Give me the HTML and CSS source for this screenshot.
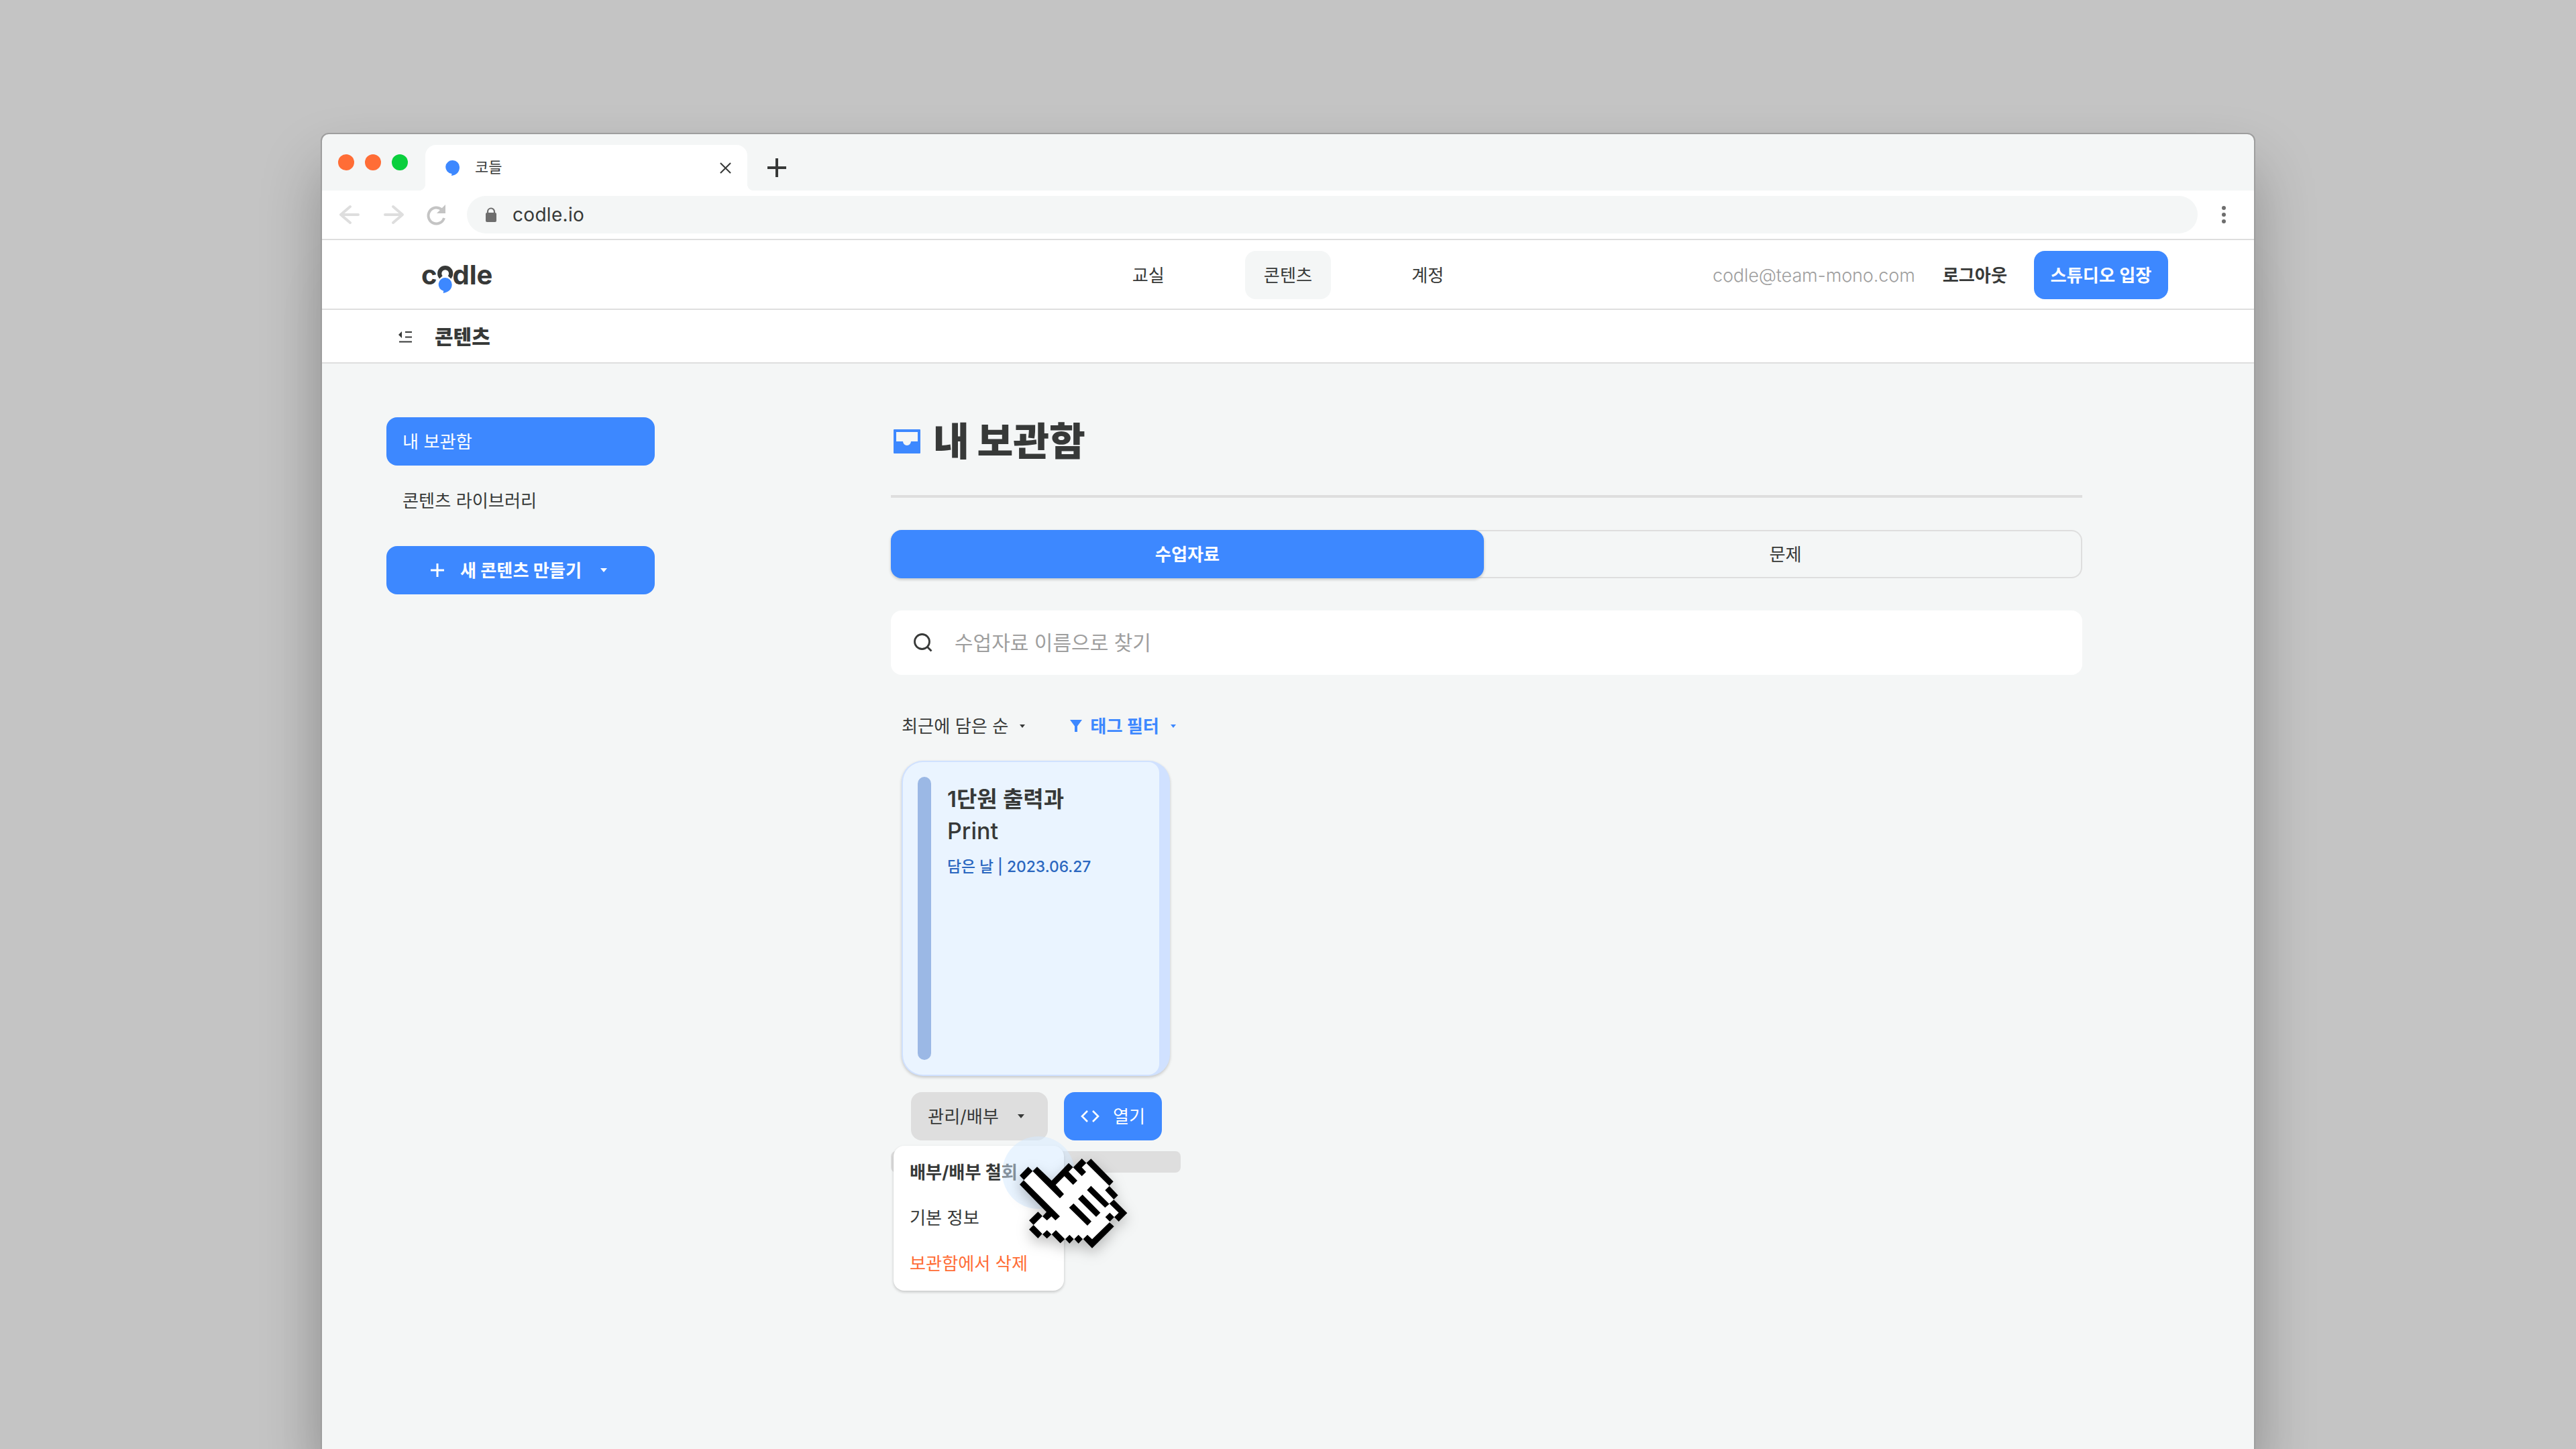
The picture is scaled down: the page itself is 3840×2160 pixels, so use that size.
FILE: index.html
```
<!DOCTYPE html>
<html lang="ko">
<head>
    <meta charset="UTF-8">
    <meta name="viewport" content="width=device-width, initial-scale=1.0">
    <title>코들</title>
    <link rel="stylesheet" href="styles.css">
</head>
<body>
    <div class="window">
        <div class="tab-bar">
            <div class="dots">
                <span class="dot"></span>
                <span class="dot"></span>
                <span class="dot dot-green"></span>
            </div>
            <div class="tab">
                <svg class="favicon" viewBox="0 0 20 23"><path d="M10 0a10 10 0 0 1 10 10c0 7-4 12-12 13l.5-3A10 10 0 0 1 10 0z" fill="#3d88ff"/></svg>
                <span class="tab-title">코들</span>
                <svg class="tab-close" viewBox="0 0 18 18"><path d="M1 1l16 16M17 1L1 17" stroke="#373938" stroke-width="2.2"/></svg>
            </div>
            <svg class="tab-new" viewBox="0 0 28 28"><path d="M14 0v28M0 14h28" stroke="#373938" stroke-width="4"/></svg>
        </div>

        <div class="toolbar">
            <svg class="arrow" viewBox="0 0 30 28"><path d="M28 14H3M16 2L2 14l14 12" fill="none" stroke="#dedede" stroke-width="4" stroke-linecap="round" stroke-linejoin="round"/></svg>
            <svg class="arrow" viewBox="0 0 30 28"><path d="M2 14h25M14 2l14 12-14 12" fill="none" stroke="#dedede" stroke-width="4" stroke-linecap="round" stroke-linejoin="round"/></svg>
            <svg class="reload" viewBox="0 0 28 30"><path d="M26 20A12 12 0 1 1 22.5 7.5" fill="none" stroke="#c4c4c4" stroke-width="4"/><path d="M28 0v13H15z" fill="#c4c4c4"/></svg>
            <div class="address">
                <svg class="lock" viewBox="0 0 16 22"><path d="M3 9V6.5a5 5 0 0 1 10 0V9" fill="none" stroke="#6e6e6e" stroke-width="2.2"/><rect y="8" width="16" height="14" rx="2" fill="#6e6e6e"/></svg>
                <span>codle.io</span>
            </div>
            <svg class="more" viewBox="0 0 6 26"><circle cx="3" cy="3" r="3"/><circle cx="3" cy="13" r="3"/><circle cx="3" cy="23" r="3"/></svg>
        </div>

        <header class="header">
            <div class="logo">
                <span>c</span>
                <svg class="logo-o" viewBox="0 0 23 43">
                    <path d="M5.4 18.4A8.500 8.500 0 1 1 18 18.400" fill="none" stroke="#373938" stroke-width="6.200"/>
                    <path d="M11.700 19a10 10 0 0 1 10 10c0 7-4.500 11.500-13 13l.5-3.300A10 10 0 0 1 11.700 19z" fill="#3d88ff" stroke="#fff" stroke-width="3" paint-order="stroke"/>
                </svg>
                <span>dle</span>
            </div>
            <nav class="nav">
                <a class="nav-item">교실</a>
                <a class="nav-item active">콘텐츠</a>
                <a class="nav-item">계정</a>
            </nav>
            <div class="account">
                <span class="email">codle@team-mono.com</span>
                <span class="logout">로그아웃</span>
                <button class="btn studio">스튜디오 입장</button>
            </div>
        </header>

        <div class="sub-header">
            <svg class="fold" viewBox="0 0 20 17"><path d="M0 5l5-5v10z"/><path d="M10 0h10v2H10zM10 7.500h10v2H10zM1 14.500h19v2H1z"/></svg>
            <span>콘텐츠</span>
        </div>

        <div class="body">
            <aside class="sidebar">
                <a class="side-item active">내 보관함</a>
                <a class="side-item">콘텐츠 라이브러리</a>
                <button class="btn create">
                    <svg class="plus" viewBox="0 0 20 20"><path d="M10 0v20M0 10h20" stroke="#fff" stroke-width="3"/></svg>
                    <span>새 콘텐츠 만들기</span>
                    <svg class="caret" viewBox="0 0 10 6"><path d="M0 0h10L5 6z"/></svg>
                </button>
            </aside>

            <main class="main">
                <h1 class="title">
                    <svg class="inbox" viewBox="0 0 40 36"><path fill-rule="evenodd" d="M1 0h38a1 1 0 0 1 1 1v34a1 1 0 0 1-1 1H1a1 1 0 0 1-1-1V1a1 1 0 0 1 1-1zM4 4v14h10a6 6 0 0 0 12 0h10V4z" fill="#3d88ff"/></svg>
                    내 보관함
                </h1>
                <div class="tabs">
                    <a class="tabs-item active">수업자료</a>
                    <a class="tabs-item">문제</a>
                </div>
                <div class="search">
                    <svg class="search-icon" viewBox="0 0 28 28"><circle cx="12.500" cy="12.500" r="11" fill="none" stroke="#373938" stroke-width="2.800"/><path d="M20 20l6.500 6.500" stroke="#373938" stroke-width="2.800"/></svg>
                    <span>수업자료 이름으로 찾기</span>
                </div>
                <div class="filters">
                    <span class="sort">최근에 담은 순</span>
                    <svg class="caret small" viewBox="0 0 10 6"><path d="M0 0h10L5 6z"/></svg>
                    <svg class="funnel" viewBox="0 0 18 18"><path d="M0 0h18l-7 9.500V18H7V9.500z"/></svg>
                    <span class="tag">태그 필터</span>
                    <svg class="caret small blue" viewBox="0 0 10 6"><path d="M0 0h10L5 6z"/></svg>
                </div>

                <div class="material">
                    <div class="card">
                        <div class="card-inner">
                            <div class="card-bar"></div>
                            <div class="card-text">
                                <div class="card-title">1단원 출력과</div>
                                <div class="card-title latin">Print</div>
                                <div class="card-date">담은 날 | 2023.06.27</div>
                            </div>
                        </div>
                    </div>
                    <div class="actions">
                        <button class="btn manage">
                            <span>관리/배부</span>
                            <svg class="caret" viewBox="0 0 10 6"><path d="M0 0h10L5 6z"/></svg>
                        </button>
                        <button class="btn open">
                            <svg class="code" viewBox="0 0 28 18"><path d="M10 1L2 9l8 8M18 1l8 8-8 8" fill="none" stroke="#fff" stroke-width="2.600"/></svg>
                            <span>열기</span>
                        </button>
                    </div>
                    <div class="strip"></div>
                    <div class="menu">
                        <a class="menu-item strong">배부/배부 철회</a>
                        <a class="menu-item">기본 정보</a>
                        <a class="menu-item danger">보관함에서 삭제</a>
                    </div>
                    <div class="click-ring"></div>
                    <svg class="pointer" viewBox="0 0 660 570">
                        <path fill="#fff" d="M79 177L118 137L138 128L200 190L285 110L310 130L338 101L358 101L379 92L465 190L461 204L475 240L481 265L530 325L503 350L483 343L463 355L463 363L472 376L384 470L343 441L323 441L283 441L262 441L242 450L203 420L162 420L142 425L110 398L122 378L112 358L142 330L182 340L202 330L70 197z"/>
                        <path d="M98 118L118 137L79 177L60 157z"/>
                        <path d="M78 178L240 340L220 358L202 340L182 358L162 340L180 320L60 197z"/>
                        <path d="M138 118L203 180L279 101L299 120L279 140L318 180L299 199L260 160L221 199L258 240L240 259L118 137z"/>
                        <path d="M338 81L358 101L338 121L357 141L338 160L299 121z"/>
                        <path d="M379 82L479 184L461 203L358 101z"/>
                        <path d="M461 204L500 245L481 264L442 223z"/>
                        <path d="M481 265L541 325L503 363L483 343L503 323L461 283z"/>
                        <path d="M463 323L483 343L463 363L443 343z"/>
                        <path d="M462 366L482 385L384 482L344 441L363 422L384 442z"/>
                        <path d="M323 422L342 441L323 461L304 441zM283 422L302 441L283 461L264 441zM182 401L202 420L182 439L162 420z"/>
                        <path d="M222 401L262 441L242 460L203 420z"/>
                        <path d="M122 378L161 418L142 438L102 398z"/>
                        <path d="M142 319L162 338L122 378L102 358z"/>
                        <path d="M301 282L381 362L363 381L281 301zM341 242L421 323L402 342L321 262zM379 203L461 284L442 301L361 222z"/>
                    </svg>
                </div>
            </main>
        </div>
    </div>
</body>
</html>
```
FILE: styles.css
```
* {
    box-sizing: border-box;
}

body {
    margin: 0;
    height: 2160px;
    padding: 200px 480px 0;
    overflow: hidden;
    background-color: #c4c4c4;
    color: #373938;
    font-family: Inter, "Noto Sans CJK KR", sans-serif;
    font-size: 26.2px;
    line-height: 1;
}

svg {
    display: block;
    flex: none;
    overflow: visible;
}

.window {
    height: 1960px;
    border-radius: 10px 10px 0 0;
    background-color: #f4f6f6;
    box-shadow: 0 0 0 2px #9e9e9e, 0 50px 90px rgba(0, 0, 0, 0.28), 0 200px 90px rgba(0, 0, 0, 0.04);
}

/* browser chrome */
.tab-bar {
    display: flex;
    height: 84px;
    padding: 16px 24px 0;
}

.dots {
    display: flex;
    gap: 16px;
    padding-top: 14px;
    margin-right: 26px;
}

.dot {
    width: 24px;
    height: 24px;
    border-radius: 50%;
    background-color: #ff6d36;
}

.dot-green {
    background-color: #0acf3d;
}

.tab {
    position: relative;
    display: flex;
    align-items: center;
    width: 480px;
    height: 68px;
    padding: 0 24px 0 31px;
    border-radius: 16px 16px 0 0;
    background-color: #ffffff;
}

.tab::before,
.tab::after {
    content: "";
    position: absolute;
    bottom: 0;
    width: 10px;
    height: 10px;
}

.tab::before {
    left: -10px;
    background: radial-gradient(circle at 0 0, transparent 10px, #ffffff 10.5px);
}

.tab::after {
    right: -10px;
    background: radial-gradient(circle at 100% 0, transparent 10px, #ffffff 10.5px);
}

.favicon {
    width: 20px;
    height: 23px;
}

.tab-title {
    flex: 1;
    margin-left: 23px;
    padding-bottom: 2px;
    font-size: 22px;
}

.tab-close {
    width: 17px;
    height: 17px;
}

.tab-new {
    width: 28px;
    height: 28px;
    margin: 20px 0 0 30px;
}

.toolbar {
    display: flex;
    align-items: center;
    height: 74px;
    padding: 0 42px 0 26px;
    border-bottom: 2px solid #dedede;
    background-color: #ffffff;
}

.arrow {
    width: 30px;
    height: 28px;
    margin-right: 36px;
}

.reload {
    width: 28px;
    height: 30px;
    margin: 0 32px 0 -2px;
}

.address {
    display: flex;
    align-items: center;
    flex: 1;
    height: 56px;
    padding-left: 28px;
    border-radius: 28px;
    background-color: #f4f6f6;
    font-size: 28px;
    letter-spacing: 0.3px;
}

.lock {
    width: 16px;
    height: 22px;
    margin-right: 24px;
}

.more {
    width: 6px;
    height: 26px;
    margin-left: 36px;
    fill: #6e6e6e;
}

/* site header */
.header {
    display: grid;
    grid-template-columns: 1fr auto 1fr;
    align-items: center;
    height: 104px;
    padding: 2px 128px 0 148px;
    border-bottom: 2px solid #dedede;
    background-color: #ffffff;
}

.logo {
    display: flex;
    height: 30px;
    font-size: 40px;
    font-weight: 700;
    line-height: 29px;
}

.logo-o {
    width: 23px;
    height: 43px;
}

.nav {
    display: flex;
    gap: 92px;
    margin-left: -20px;
}

.nav-item {
    height: 72px;
    padding: 0 28px;
    border-radius: 16px;
    line-height: 74px;
}

.nav-item.active {
    background-color: #f4f6f6;
}

.account {
    display: flex;
    align-items: center;
    justify-content: flex-end;
}

.email {
    color: #9e9e9e;
    font-size: 27px;
    font-weight: 300;
    letter-spacing: -0.1px;
}

.logout {
    margin: 0 40px 0 41px;
    padding-top: 2px;
    font-weight: 700;
}

.btn {
    display: flex;
    align-items: center;
    justify-content: center;
    height: 72px;
    padding: 0;
    border: none;
    border-radius: 16px;
    background-color: #3d88ff;
    color: #ffffff;
    font: inherit;
}

.btn span {
    padding-top: 2px;
}

.studio {
    width: 200px;
    padding-top: 2px;
    font-weight: 700;
}

.sub-header {
    display: flex;
    align-items: center;
    height: 80px;
    padding: 2px 0 0 114px;
    border-bottom: 2px solid #dedede;
    background-color: #ffffff;
    font-size: 30px;
    font-weight: 900;
}

.fold {
    width: 20px;
    height: 17px;
    margin-right: 34px;
    fill: #373938;
}

/* page */
.body {
    display: flex;
    gap: 352px;
    padding: 80px 96px 0;
}

.sidebar {
    width: 400px;
}

.side-item {
    display: block;
    height: 72px;
    margin-bottom: 16px;
    padding-left: 24px;
    border-radius: 16px;
    line-height: 74px;
}

.side-item.active {
    background-color: #3d88ff;
    color: #ffffff;
}

.create {
    width: 400px;
    margin-top: 32px;
    padding-right: 5px;
    font-weight: 700;
}

.plus {
    width: 20px;
    height: 20px;
    margin-right: 24px;
}

.caret {
    width: 10px;
    height: 6px;
    margin-left: 28px;
    fill: currentColor;
}

.caret.small {
    width: 8px;
    height: 5px;
    margin-left: 17px;
}

.caret.blue {
    color: #3d88ff;
}

.main {
    width: 1776px;
}

.title {
    display: flex;
    align-items: center;
    height: 120px;
    margin: 0 0 48px;
    padding: 0 0 44px 4px;
    border-bottom: 4px solid #dedede;
    font-size: 58.5px;
    font-weight: 900;
}

.inbox {
    width: 40px;
    height: 36px;
    margin-right: 19px;
}

.tabs {
    display: flex;
    height: 72px;
    border-radius: 16px;
    box-shadow: inset 0 0 0 2px #dedede;
    line-height: 74px;
    text-align: center;
}

.tabs-item {
    flex: 1;
    padding-left: 7px;
}

.tabs-item.active {
    flex: none;
    width: 884px;
    padding-left: 0;
    border-radius: 16px;
    background-color: #3d88ff;
    box-shadow: 0 2px 4px rgba(0, 0, 0, 0.2);
    color: #ffffff;
    font-weight: 700;
}

.search {
    display: flex;
    align-items: center;
    height: 96px;
    margin-top: 48px;
    padding-left: 34px;
    border-radius: 16px;
    background-color: #ffffff;
    color: #9e9e9e;
    font-size: 30px;
}

.search-icon {
    width: 28px;
    height: 28px;
    margin-right: 33px;
}

.filters {
    display: flex;
    align-items: center;
    height: 128px;
    padding: 0 0 0 16px;
    padding-top: 24px;
}

.sort,
.tag {
    padding-top: 2px;
}

.funnel {
    width: 18px;
    height: 18px;
    margin: 0 12px 0 67px;
    fill: #3d88ff;
}

.tag {
    color: #3d88ff;
    font-weight: 700;
}

.material {
    position: relative;
    width: 432px;
}

.card {
    width: 400px;
    height: 470px;
    margin: 0 16px;
    padding: 2px 16px 2px 2px;
    border-radius: 32px;
    background-color: #d0e1ff;
    box-shadow: 0 2px 4px rgba(0, 0, 0, 0.2);
}

.card-inner {
    display: flex;
    height: 466px;
    padding: 22px;
    border-radius: 30px 16px 16px 30px;
    background-color: #eaf4ff;
}

.card-bar {
    width: 20px;
    height: 422px;
    border-radius: 10px;
    background-color: #9bb8e5;
}

.card-text {
    margin-left: 24px;
    padding-top: 9px;
}

.card-title {
    font-size: 33px;
    font-weight: 600;
    line-height: 48px;
}

.card-title.latin {
    font-size: 34px;
    font-weight: 500;
}

.card-date {
    margin-top: 18px;
    color: #2b67c0;
    font-size: 22.8px;
    font-weight: 500;
}

.actions {
    display: flex;
    gap: 24px;
    padding: 24px 0 16px 30px;
}

.manage {
    width: 204px;
    padding-right: 10px;
    background-color: #dedede;
    color: #373938;
}

.open {
    width: 146px;
}

.code {
    width: 28px;
    height: 18px;
    margin-right: 20px;
}

.strip {
    height: 32px;
    border-radius: 8px;
    background-color: #dedede;
}

.menu {
    position: absolute;
    top: 574px;
    left: 4px;
    width: 254px;
    height: 216px;
    padding: 6px 24px;
    border-radius: 16px;
    background-color: #ffffff;
    box-shadow: 0 2px 4px rgba(0, 0, 0, 0.2);
}

.menu-item {
    display: block;
    line-height: 68px;
    white-space: nowrap;
}

.strong {
    font-weight: 700;
}

.danger {
    color: #ff6d36;
}

.click-ring {
    position: absolute;
    top: 560px;
    left: 166px;
    width: 108px;
    height: 108px;
    border-radius: 50%;
    background-color: rgba(211, 233, 255, 0.5);
}

.pointer {
    position: absolute;
    top: 566px;
    left: 172px;
    width: 220px;
    height: 190px;
    filter: drop-shadow(0 8px 10px rgba(0, 0, 0, 0.25));
}
```
